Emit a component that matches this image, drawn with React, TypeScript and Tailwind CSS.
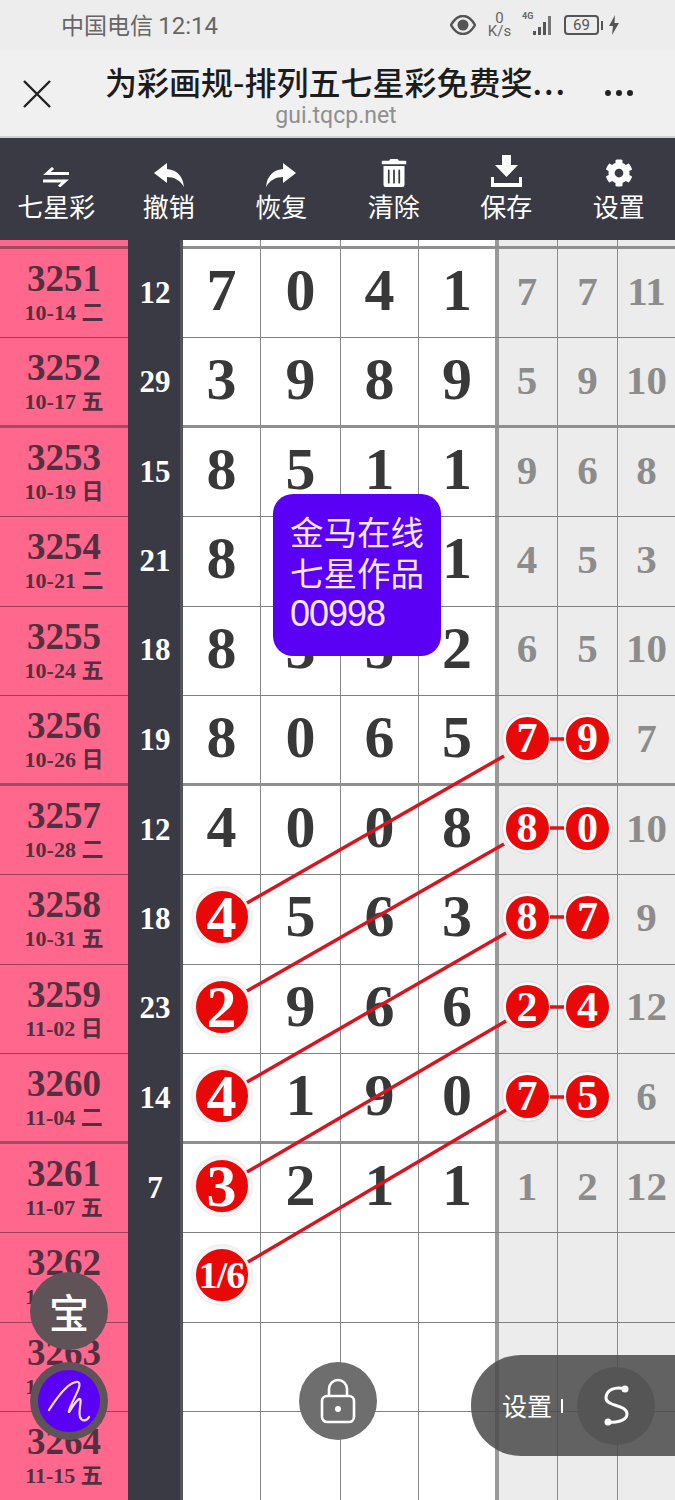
import React from "react";
import { FaTrashAlt, FaCog } from "react-icons/fa";

type V = string | { r: string };
type Row = { id: string; date: string; sum: string; n: V[]; top: boolean };

const R = (r: string) => ({ r });
const rows: Row[] = [
  { id: "3251", date: "10-14 二", sum: "12", n: ["7", "0", "4", "1", "7", "7", "11"], top: true },
  { id: "3252", date: "10-17 五", sum: "29", n: ["3", "9", "8", "9", "5", "9", "10"], top: false },
  { id: "3253", date: "10-19 日", sum: "15", n: ["8", "5", "1", "1", "9", "6", "8"], top: true },
  { id: "3254", date: "10-21 二", sum: "21", n: ["8", "5", "7", "1", "4", "5", "3"], top: false },
  { id: "3255", date: "10-24 五", sum: "18", n: ["8", "3", "5", "2", "6", "5", "10"], top: false },
  { id: "3256", date: "10-26 日", sum: "19", n: ["8", "0", "6", "5", R("7"), R("9"), "7"], top: false },
  { id: "3257", date: "10-28 二", sum: "12", n: ["4", "0", "0", "8", R("8"), R("0"), "10"], top: true },
  { id: "3258", date: "10-31 五", sum: "18", n: [R("4"), "5", "6", "3", R("8"), R("7"), "9"], top: false },
  { id: "3259", date: "11-02 日", sum: "23", n: [R("2"), "9", "6", "6", R("2"), R("4"), "12"], top: false },
  { id: "3260", date: "11-04 二", sum: "14", n: [R("4"), "1", "9", "0", R("7"), R("5"), "6"], top: false },
  { id: "3261", date: "11-07 五", sum: "7", n: [R("3"), "2", "1", "1", "1", "2", "12"], top: true },
  { id: "3262", date: "11-09 日", sum: "", n: [R("1/6"), "", "", "", "", "", ""], top: false },
  { id: "3263", date: "11-12 二", sum: "", n: ["", "", "", "", "", "", ""], top: false },
  { id: "3264", date: "11-15 五", sum: "", n: ["", "", "", "", "", "", ""], top: false },
];

const cellW = ["w-[78px]", "w-[80px]", "w-[78px]", "w-[80px]", "w-[59px]", "w-[60px]", "w-[57px]"];
const serif = "font-['Liberation_Serif','Noto_Sans_CJK_SC',serif] font-bold";
const cellBorder = (i: number) =>
  i === 3 ? "border-r-[4px] border-r-[#999999]" : i === 6 ? "" : "border-r border-r-[#8a8a8a]";

const tools = [
  { label: "七星彩", icon: (
    <svg width="26" height="20" viewBox="0 0 26 20" fill="none" stroke="#fff" strokeWidth="3">
      <path d="M26 6.500H4L10 1" />
      <path d="M0 14H22L16 19.500" />
    </svg>
  ) },
  { label: "撤销", icon: (
    <svg width="30" height="24" viewBox="0 0 30 24" fill="#fff">
      <path d="M0 10L13 0V6C24 7 29 14 30 24C26 17 20 14 13 14V20Z" />
    </svg>
  ) },
  { label: "恢复", icon: (
    <svg width="30" height="24" viewBox="0 0 30 24" fill="#fff">
      <path d="M30 10L17 0V6C6 7 1 14 0 24C4 17 10 14 17 14V20Z" />
    </svg>
  ) },
  { label: "清除", icon: <FaTrashAlt size={28} color="#fff" /> },
  { label: "保存", icon: (
    <svg width="31" height="32" viewBox="0 0 31 32" fill="#fff">
      <path d="M11 0H20V10H27L15.500 22L4 10H11Z" />
      <path d="M0 22H3V28H28V22H31V32H0Z" />
    </svg>
  ) },
  { label: "设置", icon: <FaCog size={28} color="#fff" /> },
];

function Cell({ v, i }: { v: V; i: number }) {
  const grey = i >= 4;
  const big = i === 0;
  const bg = grey ? "bg-[#ececec]" : "bg-white";
  let inner: React.ReactNode = null;
  if (typeof v === "string") {
    if (v) {
      inner = grey ? (
        <span className={`text-[41px] leading-none text-[#8c8c8c] ${serif}`}>{v}</span>
      ) : (
        <span className={`mb-[2px] text-[60px] leading-none text-[#383838] ${serif}`}>{v}</span>
      );
    }
  } else {
    inner = big ? (
      <span className={`flex h-[60px] w-[60px] shrink-0 items-center justify-center rounded-full border-[4px] border-[#f4f4f4] bg-[#e80808] text-white shadow-[0_0_2px_rgba(0,0,0,0.2)] ${v.r.length > 1 ? "text-[38px] tracking-[-1px]" : "text-[60px]"} leading-none ${serif}`}>
        {v.r}
      </span>
    ) : (
      <span className={`flex h-[49px] w-[49px] shrink-0 items-center justify-center rounded-full border-[3px] border-[#f8f8f8] bg-[#e80808] text-[42px] leading-none text-white shadow-[0_0_2px_rgba(0,0,0,0.2)] ${serif}`}>
        {v.r}
      </span>
    );
  }
  return (
    <div className={`flex h-full items-center justify-center pb-[4px] ${i === 4 ? "pr-[2px]" : ""} ${cellW[i]} ${cellBorder(i)} ${bg}`}>
      {inner}
    </div>
  );
}

function TableRow({ row }: { row: Row }) {
  const line = row.top ? "border-t-[3px] border-t-[#8f8f8f]" : "border-t border-t-[#808080]";
  const pinkLine = row.top ? "border-t-[3px] border-t-[#a54a64]" : "border-t border-t-[#a03f5c]";
  return (
    <div className={`flex shrink-0 ${row.top ? "-mt-[1.5px] h-[91px]" : "h-[89.5px]"}`}>
      <div className={`flex w-[128px] flex-col items-center bg-[#ff688c] pt-[10px] text-[#53303f] ${pinkLine} ${serif}`}>
        <span className="text-[37px] leading-[40px]">{row.id}</span>
        <span className="mt-[1px] text-[22px] leading-[26px]">{row.date}</span>
      </div>
      <div className={`flex w-[55px] items-center justify-center border-r-[3px] border-r-[#55555c] bg-[#3a3a44] pl-[2px] text-[31px] text-white ${row.top ? "pt-[3px]" : ""} ${serif}`}>
        {row.sum}
      </div>
      <div className={`flex grow ${line}`}>
        {row.n.map((v, i) => (
          <Cell key={i} v={v} i={i} />
        ))}
      </div>
    </div>
  );
}

export default function App() {
  return (
    <div className="relative h-[1500px] w-[675px] overflow-hidden bg-white font-['Noto_Sans_CJK_SC',sans-serif]">
      <div className="flex h-[50px] items-center bg-[#ededed] pl-[61px]">
        <span className="w-[389px] shrink-0 text-[23px] leading-none text-[#666]">
          中国电信 <span className="font-['Roboto',sans-serif] text-[24px]">12:14</span>
        </span>
        <div className="flex items-center text-[#555]">
          <svg width="26" height="20" viewBox="0 0 26 20" className="mr-[12px]">
            <path d="M1 10C5 3 9 1 13 1s8 2 12 9c-4 7-8 9-12 9S5 17 1 10z" fill="none" stroke="#555" strokeWidth="2.5" />
            <circle cx="13" cy="10" r="5.500" fill="#555" />
          </svg>
          <span className="mr-[11px] flex w-[23px] flex-col items-center font-['Roboto',sans-serif] text-[15px] leading-[13px] text-[#666]">
            <span>0</span>
            <span>K/s</span>
          </span>
          <span className="relative mr-[11px] h-[22px] w-[31px]">
            <span className="absolute left-0 top-[-3px] font-['Roboto',sans-serif] text-[9px] font-bold leading-[10px] text-[#666]">4G</span>
            <svg width="31" height="20" viewBox="0 0 31 20" className="absolute left-0 top-[2px]">
              <rect x="11" y="15" width="3" height="4" fill="#555" />
              <rect x="16" y="11" width="3" height="8" fill="#555" />
              <rect x="21" y="6" width="3" height="13" fill="#555" />
              <rect x="26" y="0" width="3" height="19" fill="#777" />
            </svg>
          </span>
          <span className="flex h-[20px] w-[35px] items-center justify-center rounded-[4px] border-2 border-[#555] font-['Roboto',sans-serif] text-[15px] leading-none text-[#555]">
            69
          </span>
          <span className="ml-[2px] h-[9px] w-[2px] bg-[#555]" />
          <svg width="10" height="20" viewBox="0 0 10 20" className="ml-[6px]">
            <path d="M6 0L0 11h4l-1 9 7-12H5.500z" fill="#555" />
          </svg>
        </div>
      </div>

      <div className="flex h-[88px] items-start border-b-2 border-b-[#d0d0d0] bg-[#f0f0f0]">
        <svg width="28" height="28" viewBox="0 0 28 28" className="ml-[23px] mt-[30px] shrink-0" fill="none" stroke="#222" strokeWidth="2.400">
          <path d="M1 1L27 27M27 1L1 27" />
        </svg>
        <div className="ml-[24px] flex w-[522px] shrink-0 flex-col items-center pt-[11px]">
          <span className="whitespace-nowrap text-[32px] font-medium leading-[40px] text-[#1c1c1c]">
            为彩画规-排列五七星彩免费奖<span className="tracking-[2px]">...</span>
          </span>
          <span className="mt-[2px] font-['Roboto',sans-serif] text-[23px] leading-[26px] text-[#8f8f8f]">gui.tqcp.net</span>
        </div>
        <span className="ml-[8px] mt-[40px] flex gap-[5px]">
          <span className="h-[6px] w-[6px] rounded-full bg-[#222]" />
          <span className="h-[6px] w-[6px] rounded-full bg-[#222]" />
          <span className="h-[6px] w-[6px] rounded-full bg-[#222]" />
        </span>
      </div>

      <div className="grid h-[102px] grid-cols-6 bg-[#3a3a44]">
        {tools.map((t) => (
          <div key={t.label} className="flex flex-col items-center">
            <div className="flex h-[49px] items-end justify-center">{t.icon}</div>
            <span className="mt-[3px] text-[26px] leading-[32px] text-white">{t.label}</span>
          </div>
        ))}
      </div>

      <div className="flex h-[7.5px]">
        <div className="w-[128px] bg-[#ff688c]" />
        <div className="w-[55px] border-r-[3px] border-r-[#55555c] bg-[#3a3a44]" />
        {cellW.map((w, i) => (
          <div key={w + i} className={`${w} ${i >= 4 ? "bg-[#ececec]" : "bg-white"} ${cellBorder(i)}`} />
        ))}
      </div>

      <div className="flex flex-col">
        {rows.map((row) => (
          <TableRow key={row.id} row={row} />
        ))}
      </div>

      {/* connector lines between the circled numbers */}
      <svg className="absolute left-0 top-0" width="675" height="1500" fill="none" stroke="#d8141e" strokeWidth="3.500">
        <path d="M504 756L247 903" />
        <path d="M504 844L247 991" />
        <path d="M506 933L247 1082" />
        <path d="M506 1021L247 1172" />
        <path d="M506 1110L248 1262" />
        <path d="M550 739H564M550 828H564M550 917H564M550 1007H564M550 1097H564" />
      </svg>

      {/* floating note */}
      <div className="absolute left-[273px] top-[494px] flex h-[162px] w-[168px] flex-col rounded-[20px] bg-[#5a00f5] pl-[17px] pt-[16px] text-[33.500px] leading-[41px] text-[#f5e6ff]">
        <span>金马在线</span>
        <span>七星作品</span>
        <span className="mt-[3px] font-['Liberation_Sans',sans-serif] text-[36px] leading-[38px] tracking-[-1px]">00998</span>
      </div>

      {/* floating buttons */}
      <div className="absolute left-[30px] top-[1272px] flex h-[78px] w-[78px] items-center justify-center rounded-full bg-[#5f5357] text-[40px] font-medium text-white">
        宝
      </div>
      <div className="absolute left-[30px] top-[1362px] flex h-[78px] w-[78px] items-center justify-center rounded-full bg-[#5f5357]">
        <div className="flex h-[62px] w-[62px] items-center justify-center rounded-full bg-[#5a00f5]">
          <svg width="46" height="46" viewBox="0 0 46 46" fill="none" stroke="#f3dcff" strokeWidth="2.200" strokeLinecap="round" strokeLinejoin="round">
            <path d="M3 32C12 18 24 3 32 4C38 6 24 26 23 33C22 38 28 24 33 21C37 20 32 32 34 39C36 44 41 43 43 39" />
          </svg>
        </div>
      </div>
      <div className="absolute left-[299px] top-[1362px] flex h-[78px] w-[78px] items-center justify-center rounded-full bg-[#6e6e6e]">
        <svg width="36" height="46" viewBox="0 0 36 46" fill="none" stroke="#fff" strokeWidth="2.600">
          <rect x="2" y="18" width="32" height="26" rx="5" />
          <path d="M9 18V11a9 9 0 0 1 18 0v7" />
          <circle cx="18" cy="31" r="3" fill="#fff" stroke="none" />
        </svg>
      </div>
      <div className="absolute left-[471px] top-[1355px] flex h-[101px] w-[204px] items-center rounded-l-[50px] bg-[#4a4a4a]/85 pl-[31px]">
        <span className="text-[25px] leading-none text-white">设置</span>
        <span className="ml-[9px] h-[14px] w-[2px] bg-white" />
        <div className="ml-[14px] flex h-[78px] w-[78px] items-center justify-center rounded-full bg-[#555]">
          <svg width="32" height="42" viewBox="0 0 32 42" fill="none" stroke="#fff" strokeWidth="3" strokeLinecap="round">
            <path d="M25 4C15 1 6 5 6 13C6 22 27 19 27 29C27 36 15 38 8 37" />
            <circle cx="25" cy="4" r="3.500" fill="#fff" stroke="none" />
            <circle cx="8" cy="37" r="3.500" fill="#fff" stroke="none" />
          </svg>
        </div>
      </div>
    </div>
  );
}
